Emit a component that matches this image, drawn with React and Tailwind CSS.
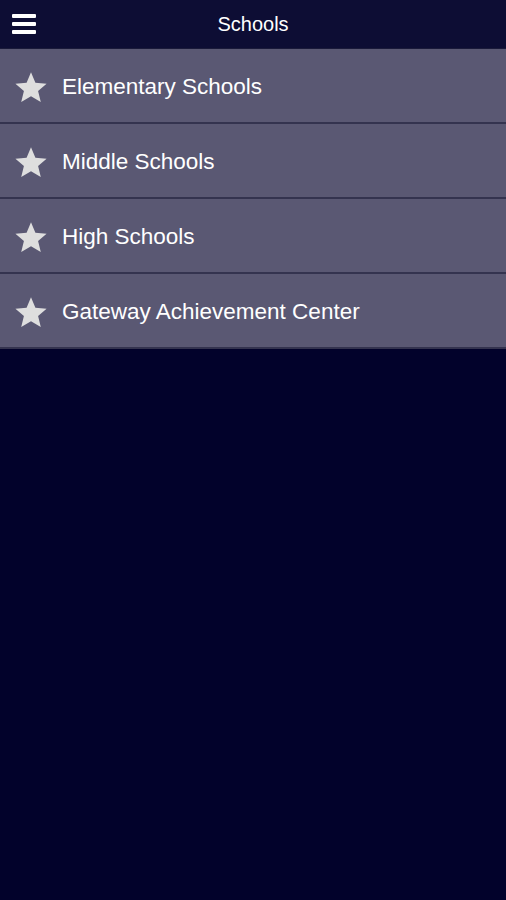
import React from 'react';

const items = [
  'Elementary Schools',
  'Middle Schools',
  'High Schools',
  'Gateway Achievement Center',
];

function Star() {
  return (
    <svg width="34" height="33" viewBox="0 0 24 23" className="shrink-0">
      <path
        d="M12 0.8l3.1 7.4 7.9.6-6 5.2 1.9 7.8L12 17.6l-6.9 4.2 1.9-7.8-6-5.2 7.9-.6z"
        fill="#dedede"
      />
    </svg>
  );
}

export default function App() {
  return (
    <div className="min-h-[900px] w-full bg-[#02022b] font-['Liberation_Sans',Arial,sans-serif]">
      {/* Header */}
      <div className="relative h-[48px] bg-[#0d0d34] flex items-center justify-center">
        <div className="absolute left-[12px] top-[14px] flex flex-col gap-[4px]">
          <span className="block w-[24px] h-[4px] bg-white rounded-[1px]" />
          <span className="block w-[24px] h-[4px] bg-white rounded-[1px]" />
          <span className="block w-[24px] h-[4px] bg-white rounded-[1px]" />
        </div>
        <h1 className="text-white text-[20px] leading-none">Schools</h1>
      </div>

      {/* List */}
      <div className="flex flex-col border-t border-[#1a1a3a]">
        {items.map((name) => (
          <div
            key={name}
            className="h-[75px] bg-[#5a5873] border-b-2 border-[#34334f] flex items-center pt-[3px] pl-[14px] gap-[14px]"
          >
            <Star />
            <span className="text-white text-[22.5px] leading-none">{name}</span>
          </div>
        ))}
      </div>
    </div>
  );
}
